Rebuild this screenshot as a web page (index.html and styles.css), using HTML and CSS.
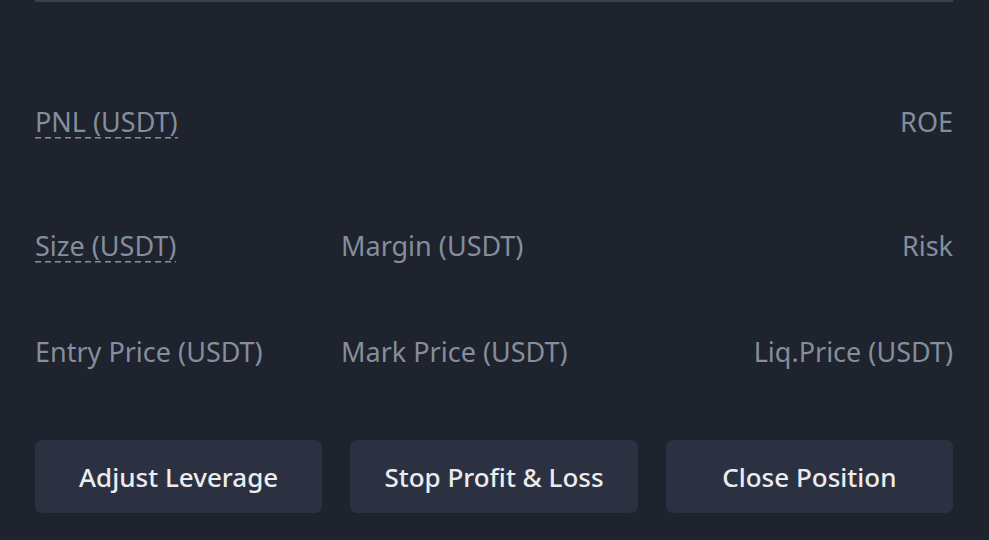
FILE: index.html
```html
<!DOCTYPE html>
<html>
<head>
<meta charset="utf-8">
<link rel="stylesheet" href="styles.css">
</head>
<body>
<div class="panel">
  <div class="divider"></div>
  <div class="row row-pnl">
    <span><span class="label dashed">PNL (USDT)</span></span>
    <span class="label"></span>
    <span class="label right">ROE</span>
  </div>
  <div class="row row-size">
    <span><span class="label dashed">Size (USDT)</span></span>
    <span class="label">Margin (USDT)</span>
    <span class="label right">Risk</span>
  </div>
  <div class="row row-price">
    <span class="label">Entry Price (USDT)</span>
    <span class="label">Mark Price (USDT)</span>
    <span class="label right">Liq.Price (USDT)</span>
  </div>
  <div class="actions">
    <button class="btn">Adjust Leverage</button>
    <button class="btn">Stop Profit &amp; Loss</button>
    <button class="btn">Close Position</button>
  </div>
</div>
</body>
</html>
```
FILE: styles.css
```css
html, body {
  margin: 0;
  padding: 0;
  background: #1f232e;
  height: 100%;
  overflow: hidden;
}
.panel {
  padding: 0 36px 0 35px;
  font-family: "Noto Sans", "Liberation Sans", sans-serif;
}
.divider {
  height: 2px;
  background: #3b404c;
}
.row {
  display: grid;
  grid-template-columns: 1fr 1fr 1fr;
  height: 32px;
  line-height: 32px;
}
.row-pnl { margin-top: 104px; }
.row-size { margin-top: 92px; }
.row-price { margin-top: 74px; }
.label {
  color: #848e9c;
  font-size: 27px;
  white-space: nowrap;
}
.label.right { text-align: right; }
.dashed {
  display: inline-block;
  background-image: repeating-linear-gradient(90deg, #848e9c 0 6px, transparent 6px 10px);
  background-size: 100% 1.5px;
  background-repeat: no-repeat;
  background-position: 0 31px;
  height: 34px;
}
.actions {
  margin-top: 72px;
  display: grid;
  grid-template-columns: 1fr 1fr 1fr;
  gap: 28px;
}
.btn {
  height: 73px;
  border: 0;
  border-radius: 7px;
  background: #2b3140;
  color: #eaecef;
  font-family: "Noto Sans", "Liberation Sans", sans-serif;
  font-size: 26px;
  font-weight: 500;
  padding: 0;
}
```
